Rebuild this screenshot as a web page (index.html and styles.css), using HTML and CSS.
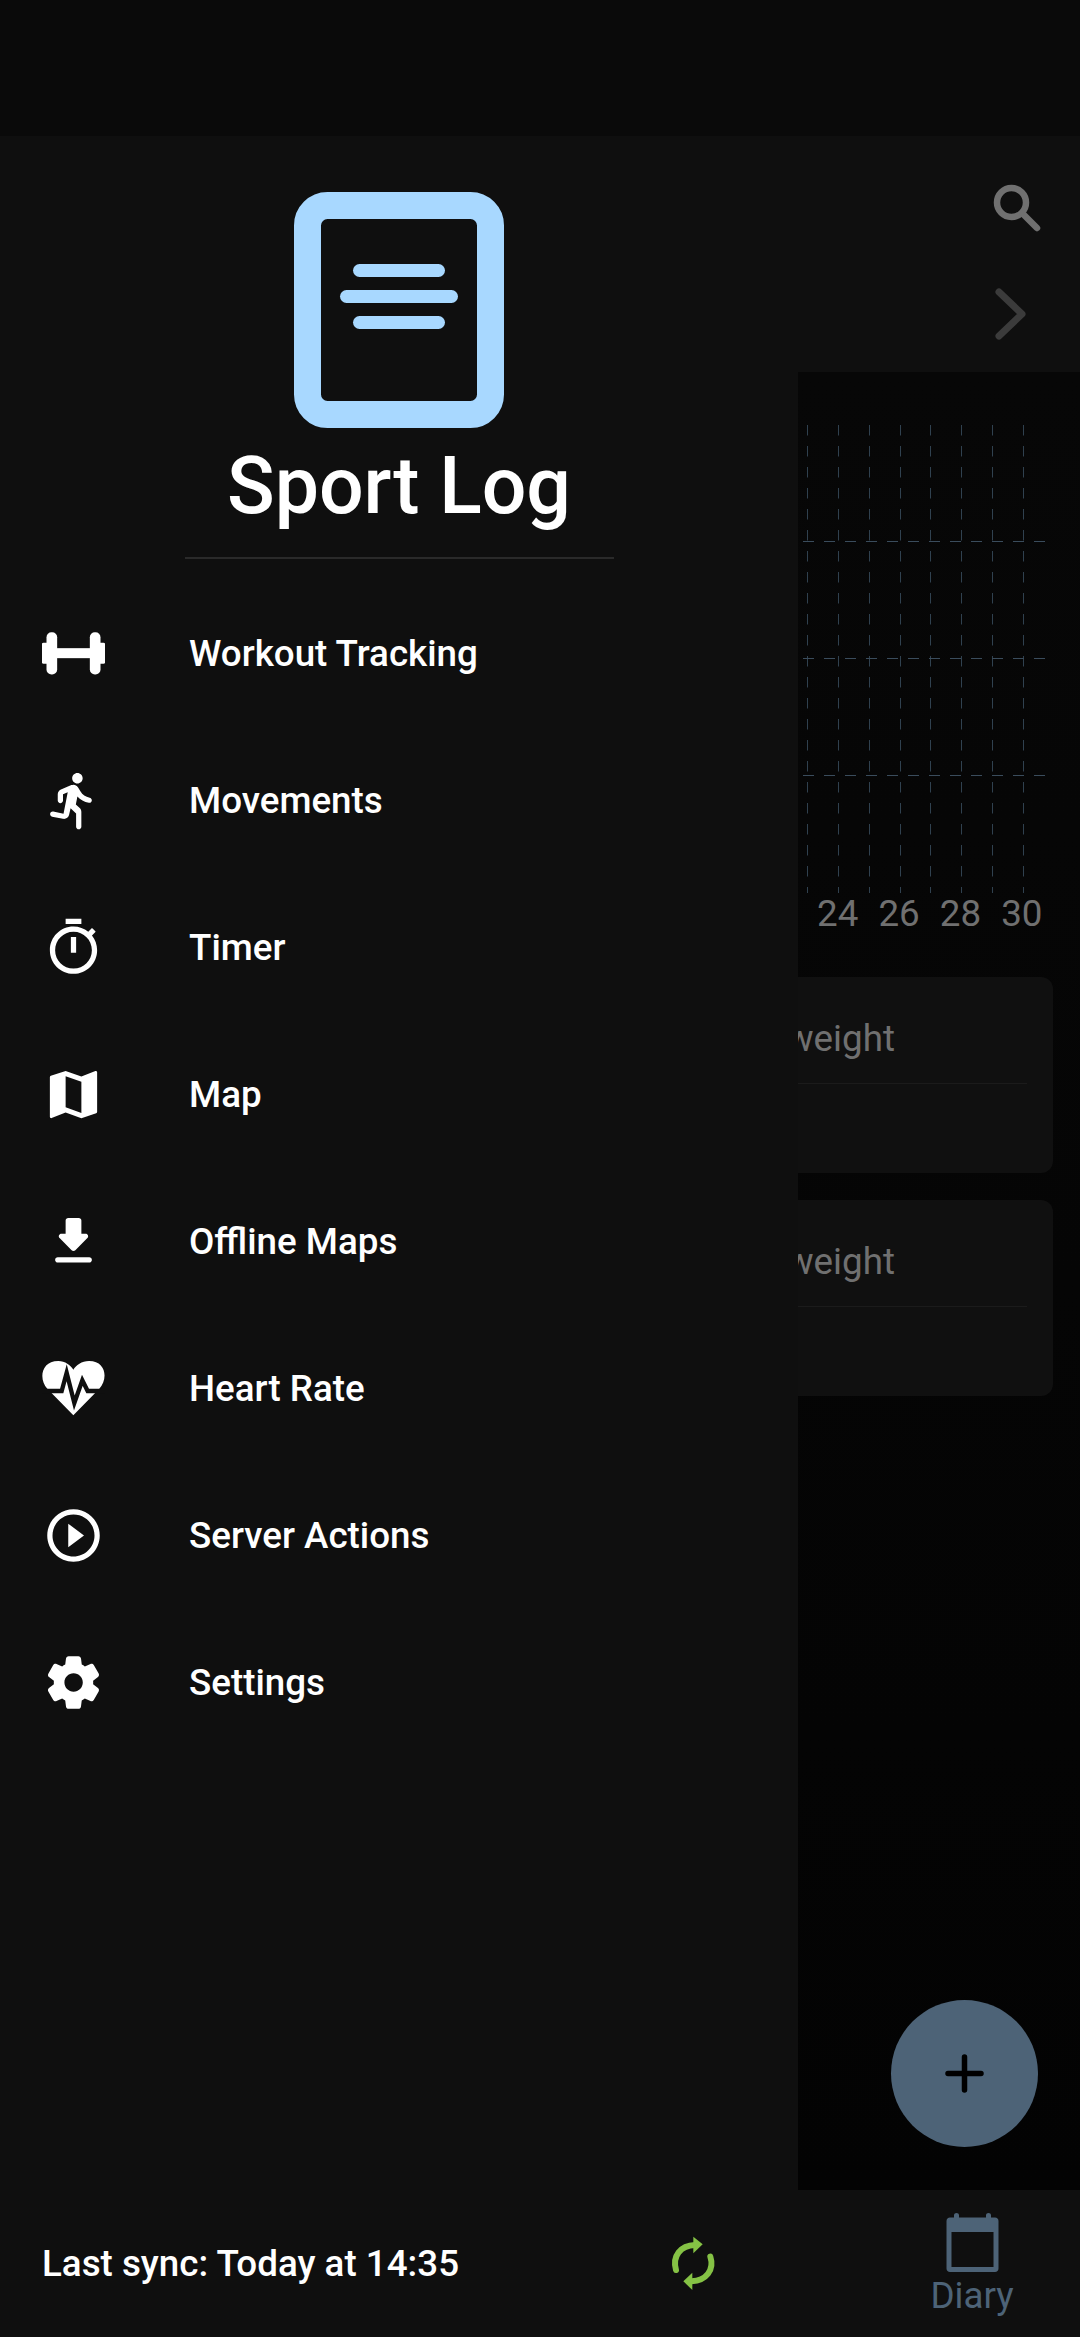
FILE: index.html
```html
<!DOCTYPE html>
<html lang="en">
<head>
    <meta charset="UTF-8">
    <meta name="viewport" content="width=device-width, initial-scale=1.0">
    <title>Sport Log</title>
    <link rel="stylesheet" href="styles.css">
</head>
<body>
    <div class="screen">
        <div class="status-bar"></div>

        <header class="app-bar">
            <svg class="search-icon" viewBox="0 0 63 63">
                <circle cx="24.5" cy="24.5" r="14.5"/>
                <path d="M36 36l14 14"/>
            </svg>
            <svg class="next-icon" viewBox="0 0 63 63">
                <path d="M22 11l23 22-23 22"/>
            </svg>
        </header>

        <main class="content">
            <svg class="chart" viewBox="0 0 300 473">
                <g class="grid-v">
                    <path d="M27.5 5V473"/>
                    <path d="M58.5 5V473"/>
                    <path d="M89.5 5V473"/>
                    <path d="M120.5 5V473"/>
                    <path d="M150.5 5V473"/>
                    <path d="M181.5 5V473"/>
                    <path d="M212.5 5V473"/>
                    <path d="M243.5 5V473"/>
                </g>
                <g class="grid-h">
                    <path d="M23 121.5H265"/>
                    <path d="M23 238.5H265"/>
                    <path d="M23 355.5H265"/>
                </g>
            </svg>
            <div class="chart-labels">
                <span>24</span>
                <span>26</span>
                <span>28</span>
                <span>30</span>
            </div>

            <section class="card">
                <div class="card-title">weight</div>
            </section>
            <section class="card">
                <div class="card-title">weight</div>
            </section>
        </main>

        <nav class="bottom-nav">
            <div class="nav-item">
                <svg class="nav-icon" viewBox="0 0 63 63">
                    <path d="M5.500 10c0-2 1.500-3.500 3.500-3.500H13V4.500c0-3.200 5-3.200 5 0V6.500H45V4.500c0-3.200 5-3.200 5 0V6.500h4c2 0 3.500 1.500 3.500 3.500v47.500c0 2-1.500 3.500-3.500 3.500H9c-2 0-3.500-1.500-3.500-3.500zM10.500 21v35h42V21z"/>
                </svg>
                <span>Diary</span>
            </div>
        </nav>

        <button class="fab">
            <svg viewBox="0 0 63 63"><path d="M31.500 15v33M15 31.500h33"/></svg>
        </button>

        <aside class="drawer">
            <div class="drawer-header">
                <svg class="logo" viewBox="0 0 210 236">
                    <rect class="logo-frame" x="13.500" y="13.500" width="183" height="209" rx="20"/>
                    <rect class="logo-line" x="59" y="72" width="92" height="13" rx="6.500"/>
                    <rect class="logo-line" x="46" y="98" width="118" height="13" rx="6.500"/>
                    <rect class="logo-line" x="59" y="124" width="92" height="13" rx="6.500"/>
                </svg>
                <h1>Sport Log</h1>
                <div class="drawer-divider"></div>
            </div>

            <ul class="menu">
                <li>
                    <svg class="menu-icon" viewBox="125.500 64.500 189 189">
                        <rect x="165" y="143" width="110" height="30"/>
                        <rect x="139" y="95" width="32" height="127" rx="15"/>
                        <rect x="269" y="95" width="32" height="127" rx="15"/>
                        <rect x="125" y="127" width="20" height="63" rx="5"/>
                        <rect x="295" y="127" width="20" height="63" rx="5"/>
                    </svg>
                    <span>Workout Tracking</span>
                </li>
                <li>
                    <svg class="menu-icon" viewBox="0 0 24 24">
                        <path d="M13.490 5.480c1.100 0 2-.9 2-2s-.9-2-2-2-2 .9-2 2 .9 2 2 2zM9.890 19.380l1-4.400 2.100 2v5c0 .55.45 1 1 1s1-.45 1-1v-5.640c0-.55-.22-1.070-.62-1.450l-1.480-1.410.6-3c1.070 1.240 2.620 2.130 4.360 2.410.6.090 1.140-.39 1.140-1 0-.49-.36-.9-.85-.98-1.520-.25-2.780-1.150-3.450-2.330l-1-1.600c-.4-.6-1-1-1.700-1-.3 0-.5.100-.8.100L7.220 7.780C6.480 8.100 6 8.820 6 9.630V12c0 .55.45 1 1 1s1-.45 1-1V9.600l1.800-.7-1.600 8.100-3.920-.8c-.54-.11-1.070.24-1.180.78-.11.54.24 1.070.78 1.180l4.110.82c1.060.21 2.100-.46 2.340-1.520z"/>
                    </svg>
                    <span>Movements</span>
                </li>
                <li>
                    <svg class="menu-icon" viewBox="0 0 24 24">
                        <path d="M15 1H9v2h6V1zm-4 13h2V8h-2v6zm8.030-6.610l1.420-1.420c-.43-.51-.9-.99-1.410-1.410l-1.420 1.420C16.070 4.740 14.120 4 12 4c-4.970 0-9 4.030-9 9s4.020 9 9 9 9-4.030 9-9c0-2.120-.74-4.070-1.970-5.610zM12 20c-3.870 0-7-3.130-7-7s3.130-7 7-7 7 3.130 7 7-3.130 7-7 7z"/>
                    </svg>
                    <span>Timer</span>
                </li>
                <li>
                    <svg class="menu-icon" viewBox="0 0 24 24">
                        <path d="M20.500 3l-.16.03L15 5.100 9 3 3.360 4.900c-.21.07-.36.25-.36.48V20.500c0 .28.22.5.5.5l.16-.03L9 18.900l6 2.100 5.640-1.900c.21-.07.36-.25.36-.48V3.500c0-.28-.22-.5-.5-.5zM15 19l-6-2.110V5l6 2.110V19z"/>
                    </svg>
                    <span>Map</span>
                </li>
                <li>
                    <svg class="menu-icon" viewBox="0 0 24 24">
                        <path d="M16.590 9H15V4c0-.55-.45-1-1-1h-4c-.55 0-1 .45-1 1v5H7.410c-.89 0-1.340 1.080-.71 1.710l4.590 4.590c.39.39 1.020.39 1.410 0l4.590-4.590c.63-.63.19-1.710-.7-1.710zM5 19c0 .55.45 1 1 1h12c.55 0 1-.45 1-1s-.45-1-1-1H6c-.55 0-1 .45-1 1z"/>
                    </svg>
                    <span>Offline Maps</span>
                </li>
                <li>
                    <svg class="menu-icon" viewBox="66 50 189 189">
                        <path d="M160 225L82 145C56 118 62 62 115 62C135 62 152 75 160 88C168 75 185 62 207 62C260 62 264 118 238 145Z"/>
                        <path class="pulse" d="M60 152H125L140 97L163 188L187 120L203 152H262"/>
                    </svg>
                    <span>Heart Rate</span>
                </li>
                <li>
                    <svg class="menu-icon" viewBox="0 0 24 24">
                        <path d="M10 16.500l6-4.500-6-4.500v9zM12 2C6.480 2 2 6.480 2 12s4.480 10 10 10 10-4.480 10-10S17.520 2 12 2zm0 18c-4.410 0-8-3.590-8-8s3.590-8 8-8 8 3.590 8 8-3.590 8-8 8z"/>
                    </svg>
                    <span>Server Actions</span>
                </li>
                <li>
                    <svg class="menu-icon" viewBox="0 0 24 24">
                        <path d="M19.500 12c0-.23-.01-.45-.03-.68l1.860-1.410c.4-.3.51-.86.26-1.300l-1.870-3.230c-.25-.44-.79-.62-1.250-.42l-2.150.91c-.37-.26-.76-.49-1.170-.68l-.29-2.310c-.06-.5-.49-.88-.99-.88h-3.730c-.51 0-.94.38-1 .88l-.29 2.310c-.41.19-.8.42-1.170.68l-2.150-.91c-.46-.2-1-.02-1.250.42L2.410 8.620c-.25.44-.14.99.26 1.300l1.860 1.410c-.02.22-.03.44-.03.67s.01.45.03.68l-1.860 1.410c-.4.3-.51.86-.26 1.300l1.870 3.230c.25.44.79.62 1.250.42l2.150-.91c.37.26.76.49 1.170.68l.29 2.310c.06.5.49.88.99.88h3.730c.5 0 .93-.38.99-.88l.29-2.310c.41-.19.8-.42 1.170-.68l2.150.91c.46.2 1 .02 1.250-.42l1.870-3.230c.25-.44.14-.99-.26-1.300l-1.860-1.410c.03-.23.04-.45.04-.68zm-7.460 3.500c-1.930 0-3.500-1.570-3.500-3.500s1.570-3.500 3.500-3.500 3.500 1.570 3.500 3.500-1.570 3.500-3.500 3.500z"/>
                    </svg>
                    <span>Settings</span>
                </li>
            </ul>

            <div class="drawer-footer">
                <span>Last sync: Today at 14:35</span>
                <svg class="sync-icon" viewBox="33 36 189 189">
                    <path class="sync-arc" d="M78 150C66 108 92 76 135 75"/>
                    <path class="sync-arc" d="M181 110C194 150 168 182 125 184"/>
                    <path class="sync-head" d="M130 50L158 73L130 100Z"/>
                    <path class="sync-head" d="M127 158L100 184L127 210Z"/>
                </svg>
            </div>
        </aside>
    </div>
</body>
</html>
```

FILE: styles.css
```css
html, body {
    margin: 0;
    padding: 0;
    background-color: #060606;
}

body {
    font-family: 'Roboto', 'Liberation Sans', sans-serif;
    color: #fff;
}

svg {
    display: block;
    flex: none;
}

/* Page behind the drawer */
.screen {
    position: relative;
    width: 1080px;
    height: 2337px;
    overflow: hidden;
    display: flex;
    flex-direction: column;
}

.status-bar {
    flex: none;
    height: 136px;
    background-color: #0a0a0a;
}

.app-bar {
    flex: none;
    height: 236px;
    box-sizing: border-box;
    padding: 42px 16px 0 0;
    display: flex;
    flex-direction: column;
    align-items: flex-end;
    gap: 40px;
    background-color: #0f0f0f;
}

.search-icon,
.next-icon {
    width: 63px;
    height: 63px;
    fill: none;
    stroke-linecap: round;
    stroke-linejoin: round;
}

.search-icon {
    margin-right: 14px;
    stroke: #707070;
    stroke-width: 6.5;
}

.next-icon {
    margin-right: 24px;
    stroke: #3b3b3b;
    stroke-width: 7;
}

.content {
    flex: 1;
    padding: 48px 27px 0;
    background: linear-gradient(#070707, #030303);
}

.chart {
    width: 300px;
    height: 473px;
    margin-left: 753px;
    fill: none;
}

.grid-v {
    stroke: #30414f;
    stroke-width: 1;
    stroke-dasharray: 10.5 10.5;
}

.grid-h {
    stroke: #3a4c5c;
    stroke-width: 1;
    stroke-dasharray: 11 10;
}

.chart-labels {
    display: flex;
    margin: -1px 0 41px 780px;
    font-size: 36.75px;
    line-height: 44px;
    color: #707070;
}

.chart-labels span {
    width: 61.4px;
    text-align: center;
}

.card {
    height: 196px;
    margin-bottom: 27px;
    padding: 0 26px 0 0;
    border-radius: 12px;
    background-color: #101010;
}

.card-title {
    height: 107px;
    box-sizing: border-box;
    padding: 40px 0 0 759px;
    font-size: 36.75px;
    line-height: 44px;
    color: #707070;
    border-bottom: 1px solid #1b1b1b;
}

.bottom-nav {
    flex: none;
    height: 147px;
    display: flex;
    justify-content: flex-end;
    background-color: #0f0f0f;
}

.nav-item {
    width: 216px;
    box-sizing: border-box;
    padding-top: 21px;
    display: flex;
    flex-direction: column;
    align-items: center;
    font-size: 36.75px;
    line-height: 43px;
    color: #4d6377;
}

.nav-icon {
    width: 63px;
    height: 63px;
    fill: #4d6377;
}

.fab {
    position: absolute;
    left: 890.5px;
    top: 2000px;
    width: 147px;
    height: 147px;
    padding: 42px;
    border: none;
    border-radius: 50%;
    background-color: #4d6377;
}

.fab svg {
    width: 63px;
    height: 63px;
    fill: none;
    stroke: #000;
    stroke-width: 5.5;
    stroke-linecap: round;
}

/* Drawer */
.drawer {
    position: absolute;
    left: 0;
    top: 136px;
    bottom: 0;
    width: 798px;
    display: flex;
    flex-direction: column;
    background-color: #0f0f0f;
}

.drawer-header {
    display: flex;
    flex-direction: column;
    align-items: center;
    padding-top: 56px;
    margin-bottom: 21px;
}

.logo {
    width: 210px;
    height: 236px;
}

.logo-frame {
    fill: none;
    stroke: #a8d8ff;
    stroke-width: 27;
}

.logo-line {
    fill: #a8d8ff;
}

h1 {
    margin: 9px 0 0;
    font-size: 78.75px;
    line-height: 98px;
    font-weight: 500;
}

.drawer-divider {
    width: 429px;
    height: 2px;
    margin-top: 22px;
    background-color: #2a2a2a;
}

.menu {
    flex: 1;
    margin: 0;
    padding: 0;
    list-style: none;
}

.menu li {
    height: 147px;
    padding-left: 42px;
    display: flex;
    align-items: center;
    gap: 84px;
    font-size: 36.75px;
    font-weight: 500;
}

.menu-icon {
    width: 63px;
    height: 63px;
    fill: #fff;
}

.pulse {
    fill: none;
    stroke: #0f0f0f;
    stroke-width: 13;
    stroke-linejoin: miter;
}

.drawer-footer {
    flex: none;
    height: 147px;
    padding: 0 74px 0 42px;
    display: flex;
    align-items: center;
    justify-content: space-between;
    font-size: 36.75px;
    font-weight: 500;
}

.sync-icon {
    width: 63px;
    height: 63px;
}

.sync-arc {
    fill: none;
    stroke: #85c245;
    stroke-width: 18;
    stroke-linecap: round;
}

.sync-head {
    fill: #85c245;
}
```
